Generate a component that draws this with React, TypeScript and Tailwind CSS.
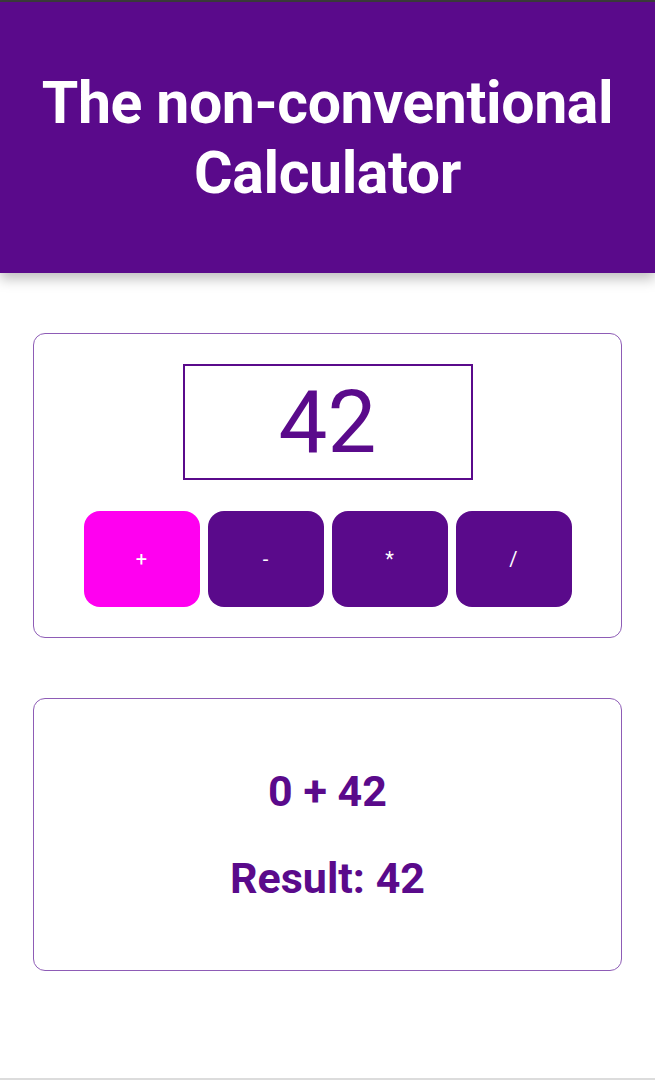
import { useState } from 'react';

const ops = ['+', '-', '*', '/'];

export default function App() {
    const [value, setValue] = useState('42');
    const [op, setOp] = useState('+');

    const num = Number(value) || 0;
    const result = op === '+' ? 0 + num : op === '-' ? 0 - num : op === '*' ? 0 * num : 0 / num;

    return (
        <div className="min-h-[1080px] bg-white font-['Roboto',sans-serif] border-t-2 border-[#3c3c3c] border-b-2 border-b-[#dcdcdc] flex flex-col">
            {/* Header */}
            <header className="h-[271px] bg-[#5a0a8b] flex items-center justify-center shadow-[0_6px_12px_rgba(0,0,0,0.25)]">
                <h1 className="text-white font-bold text-[59px] leading-[70px] text-center px-6 tracking-[-0.4px]">
                    The non-conventional Calculator
                </h1>
            </header>

            {/* Input card */}
            <div className="mx-[33px] mt-[60px] border-[1.5px] border-[#8e5cb6] rounded-xl py-[30px] flex flex-col items-center">
                <input
                    type="text"
                    value={value}
                    onChange={(e) => setValue(e.target.value)}
                    className="w-[290px] h-[116px] border-2 border-[#5a0a8b] text-center text-[87px] text-[#5a0a8b] outline-none"
                />
                <div className="flex gap-2 mt-[31px]">
                    {ops.map((o) => (
                        <button
                            key={o}
                            onClick={() => setOp(o)}
                            className={`w-[116px] h-[96px] rounded-2xl text-white text-[20px] ${o === op ? 'bg-[#ff00f0]' : 'bg-[#5a0a8b]'}`}
                        >
                            {o}
                        </button>
                    ))}
                </div>
            </div>

            {/* Result card */}
            <div className="mx-[33px] mt-[60px] h-[273px] border-[1.5px] border-[#8e5cb6] rounded-xl flex flex-col items-center justify-center gap-[42px] text-[#5a0a8b] font-bold text-[43px] leading-[45px]">
                <p>0 {op} {num}</p>
                <p>Result: {result}</p>
            </div>
        </div>
    );
}
